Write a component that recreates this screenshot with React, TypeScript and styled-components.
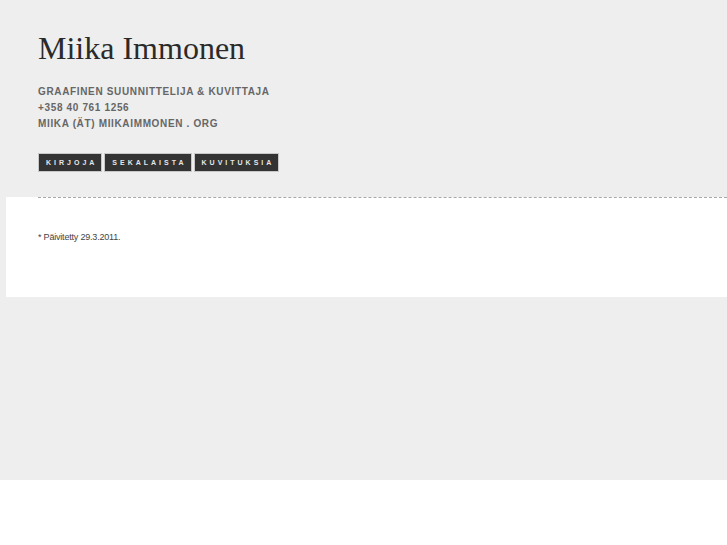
import React from "react";
import styled, { createGlobalStyle } from "styled-components";

const Global = createGlobalStyle`
  html, body { margin: 0; padding: 0; background: #fff; }
  body { font-family: "Liberation Sans", Arial, sans-serif; }
`;

const Page = styled.div`
  background: #eeeeee;
  height: 480px;
  overflow: hidden;
`;

const Header = styled.header`
  padding: 29px 0 0 38px;
  height: 197px;
  box-sizing: border-box;
`;

const Title = styled.h1`
  margin: 0;
  font-family: "Liberation Serif", "Times New Roman", serif;
  font-weight: normal;
  font-size: 32px;
  line-height: 38px;
  color: #2a2a2a;
`;

const Info = styled.div`
  margin-top: 17px;
  font-size: 10px;
  line-height: 16px;
  font-weight: bold;
  letter-spacing: 0.65px;
  color: #666;
  text-transform: uppercase;
`;

const Nav = styled.nav`
  margin-top: 21px;
  display: flex;
  gap: 2px;
`;

const NavButton = styled.a`
  display: block;
  background: #333;
  border: 1px solid #c8c8c8;
  color: #e6e6e6;
  font-size: 7px;
  font-weight: bold;
  letter-spacing: 3px;
  line-height: 17px;
  padding: 0 4px 0 7px;
  text-decoration: none;
`;

const Content = styled.main`
  margin-left: 6px;
  background: #fff;
  height: 100px;
`;

const Inner = styled.div`
  margin-left: 32px;
  border-top: 1px dashed #a8a8a8;
  padding-top: 33px;
  font-size: 9px;
  line-height: 12px;
  letter-spacing: -0.2px;
  color: #444;
`;

export default function App() {
  return (
    <>
      <Global />
      <Page>
        <Header>
          <Title>Miika Immonen</Title>
          <Info>
            <div>Graafinen suunnittelija &amp; kuvittaja</div>
            <div>+358 40 761 1256</div>
            <div>miika (ät) miikaimmonen . org</div>
          </Info>
          <Nav>
            <NavButton href="#">KIRJOJA</NavButton>
            <NavButton href="#">SEKALAISTA</NavButton>
            <NavButton href="#">KUVITUKSIA</NavButton>
          </Nav>
        </Header>
        <Content>
          <Inner>* Päivitetty 29.3.2011.</Inner>
        </Content>
      </Page>
    </>
  );
}
